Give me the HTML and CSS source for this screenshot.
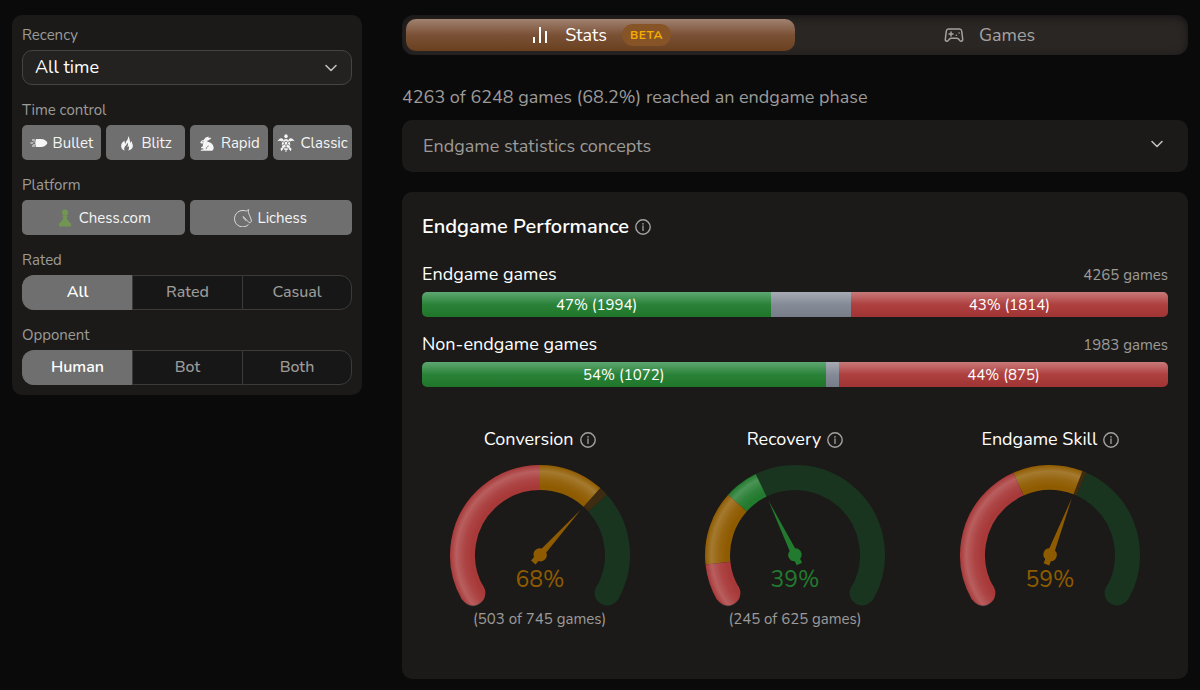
FILE: index.html
```html
<!DOCTYPE html>
<html lang="en">
<head>
    <meta charset="UTF-8">
    <meta name="viewport" content="width=device-width, initial-scale=1.0">
    <title>Endgame Stats</title>
    <link rel="stylesheet" href="styles.css">
</head>
<body>
    <!-- Shared icon and gauge shapes -->
    <svg class="defs" width="0" height="0" aria-hidden="true">
        <defs>
            <radialGradient id="shine" gradientUnits="userSpaceOnUse" cx="100" cy="93" r="90">
                <stop offset="0.76" stop-color="#fff" stop-opacity="0"/>
                <stop offset="0.84" stop-color="#fff" stop-opacity="0.06"/>
                <stop offset="0.93" stop-color="#fff" stop-opacity="0.19"/>
                <stop offset="0.97" stop-color="#fff" stop-opacity="0.08"/>
                <stop offset="1" stop-color="#fff" stop-opacity="0"/>
            </radialGradient>
            <symbol id="info" viewBox="0 0 16 16">
                <circle cx="8" cy="8" r="7.2" fill="none" stroke="currentColor" stroke-width="1.400"/>
                <circle cx="8" cy="4.900" r="0.800" fill="currentColor"/>
                <path d="M8 7v4.400" stroke="currentColor" stroke-width="1.300" stroke-linecap="round"/>
            </symbol>
            <symbol id="chevron" viewBox="0 0 14 14">
                <path d="M2 4.500l5 5 5-5" fill="none" stroke="currentColor" stroke-width="1.600" stroke-linecap="round" stroke-linejoin="round"/>
            </symbol>
        </defs>
    </svg>

    <div class="page">
        <aside class="filters">
            <div class="filter">
                <label class="filter-name" for="recency">Recency</label>
                <div class="select-box">
                    <select id="recency">
                        <option>All time</option>
                        <option>Past week</option>
                        <option>Past month</option>
                        <option>Past year</option>
                    </select>
                    <svg class="chevron"><use href="#chevron"/></svg>
                </div>
            </div>

            <div class="filter">
                <span class="filter-name" id="time-name">Time control</span>
                <div class="buttons four" role="group" aria-labelledby="time-name">
                    <button type="button">
                        <svg class="icon" viewBox="0 0 18 18" fill="currentColor">
                            <path d="M6 5h5c3 0 5 1.600 6.500 4-1.500 2.400-3.500 4-6.500 4H6c-1-2.600-1-5.400 0-8z"/>
                            <path d="M2 5.500h3v1H2zM3.500 7.500h1v1h-1zM.500 8.500h2.500v1H.500zM3.500 10h1v1h-1zM2 11.500h3v1H2z"/>
                        </svg>Bullet</button>
                    <button type="button">
                        <svg class="icon" viewBox="-1 -1 20 19" fill="currentColor">
                            <path d="M10 .800c.500 2.500-.200 3.600-1.400 5.200-1 1.300-1.300 2.400-.700 3.600C6.500 8.900 6 7.500 6.400 5.800 3.900 7.500 2.300 9.600 2.500 12c.100 2.300 1.600 4.200 3.900 4.800-.900-1.800-.600-3.200.400-4.500 1.100-1.500 2.500-2.300 2.500-4.200 1.500 1.500 1 3-.100 4.500.700.200 1.200-.200 1.500-.800.900 1.700.700 3.400-.500 5 3-.500 5.300-2.300 5.300-5 0-2.100-1.300-3.300-1.200-5.400-.700.500-1.100 1.200-1.100 2.200C11.700 6.700 12.600 3.300 10 .800z"/>
                        </svg>Blitz</button>
                    <button type="button">
                        <svg class="icon" viewBox="-1 -2 21 21" fill="currentColor">
                            <path d="M11.500 1C8.800 1.300 6.800 2.800 5.700 5 3.300 5 1.800 6.600 1.800 8.400c1.200.800 2.200.800 3.400.700-.700 1-.800 2.100-.500 3.200L2.500 13.500c0 1 .800 1.600 2.500 1.200l.500 1.300H3.800c-1 0-1.500.500-1.600 1.500h13.300c1.500-.800 2-2.300 1.700-4.200C16.700 10 14.500 8 11.500 7.200L8.700 6.300c1.800-.600 4.400-1.300 5.800-3.600-1.300-.500-2.300-.400-3.300 0z"/>
                            <circle cx="4.800" cy="7" r="0.700" fill="#6f6f6f"/>
                            <path d="M8.500 15.800c.200-2 1.200-3.300 3-4" fill="none" stroke="#6f6f6f" stroke-width="0.900"/>
                        </svg>Rapid</button>
                    <button type="button">
                        <svg class="icon" viewBox="0 0 18 18" fill="currentColor">
                            <ellipse cx="9" cy="2.300" rx="1.700" ry="2"/>
                            <path d="M6.500 5.500C4.500 3.500 2.500 3.800.500 7.200c1.700-.900 3.400-.600 4.800.700zM11.500 5.500c2-2 4-1.700 6 1.700-1.700-.900-3.400-.600-4.800.700zM5.500 13l-2 1.500.600 2.800 2.500-2.500zM12.500 13l2 1.500-.600 2.800-2.500-2.500z"/>
                            <ellipse cx="9" cy="10.500" rx="4.200" ry="5.500"/>
                            <path d="M8.500 16h1v2h-1z"/>
                            <path d="M9 7l1.600 1.200v2L9 11.400 7.400 10.200v-2zM9 11.400v3M7.400 8.200L5 7.500M10.600 8.200L13 7.500M7.400 10.200L5 11.500M10.600 10.200l2.400 1.300M6 14.500l3-1 3 1" fill="none" stroke="#6f6f6f" stroke-width="0.800"/>
                        </svg>Classic</button>
                </div>
            </div>

            <div class="filter">
                <span class="filter-name" id="platform-name">Platform</span>
                <div class="buttons two" role="group" aria-labelledby="platform-name">
                    <button type="button">
                        <svg class="icon pawn" viewBox="0 0 18 18" fill="currentColor">
                            <circle cx="9" cy="3.600" r="3.100"/>
                            <path d="M5.500 6.700h7l-1.900 1.600c.200 2.100 1.300 3.300 2.900 4.700 1 .900 1.700 2.300 1.700 4.500H2.800c0-2.200.700-3.600 1.700-4.500 1.600-1.400 2.700-2.600 2.900-4.700z"/>
                        </svg>Chess.com</button>
                    <button type="button">
                        <svg class="icon" viewBox="0 0 18 18" fill="none" stroke="currentColor" stroke-width="0.800" stroke-linejoin="round">
                            <path d="M14.500 15.500A8.200 8.200 0 1 1 9 1.500c1.600 0 2.500.300 3.200.700 1-.900 1.700-1.300 2.700-1.500-.700 1.300-.700 2.300-.300 3.600 1.500 3 2.200 5.200 2.900 7.800-.400 1.100-1.100 1.500-2.200 1.700L9.200 7.500c.400 1.800 1.200 2.900 2.900 4.100"/>
                        </svg>Lichess</button>
                </div>
            </div>

            <div class="filter">
                <span class="filter-name" id="rated-name">Rated</span>
                <div class="segments" role="radiogroup" aria-labelledby="rated-name">
                    <label><input type="radio" name="rated" checked><span>All</span></label>
                    <label><input type="radio" name="rated"><span>Rated</span></label>
                    <label><input type="radio" name="rated"><span>Casual</span></label>
                </div>
            </div>

            <div class="filter">
                <span class="filter-name" id="opponent-name">Opponent</span>
                <div class="segments" role="radiogroup" aria-labelledby="opponent-name">
                    <label><input type="radio" name="opponent" checked><span>Human</span></label>
                    <label><input type="radio" name="opponent"><span>Bot</span></label>
                    <label><input type="radio" name="opponent"><span>Both</span></label>
                </div>
            </div>
        </aside>

        <main class="content">
            <nav class="tabs">
                <button type="button" class="tab active">
                    <svg class="tab-icon" viewBox="0 0 20 20" fill="currentColor">
                        <path d="M3 12h2v6H3zM9 2h2v16H9zM15 6h2v12h-2z"/>
                    </svg>
                    <span>Stats</span>
                    <span class="beta">BETA</span>
                </button>
                <button type="button" class="tab">
                    <svg class="tab-icon" viewBox="0 0 20 20" fill="none" stroke="currentColor" stroke-width="1.500" stroke-linecap="round" stroke-linejoin="round">
                        <path d="M4.500 4h11c1.300 0 2 .800 2.200 2l1 8.500c.100 1.500-1.700 2.200-2.700 1.200L14.500 14c-.500-.500-1-.700-1.700-.700H7.200c-.700 0-1.200.200-1.700.700L4 15.700c-1 1-2.800.300-2.700-1.200l1-8.500c.200-1.200.900-2 2.200-2z"/>
                        <path d="M5 9h4M7 7v4M12.300 10.200h.1M15 8h.1"/>
                    </svg>
                    <span>Games</span>
                </button>
            </nav>

            <p class="summary">4263 of 6248 games (68.2%) reached an endgame phase</p>

            <button type="button" class="concepts">
                Endgame statistics concepts
                <svg class="chevron"><use href="#chevron"/></svg>
            </button>

            <section class="card">
                <h2>Endgame Performance <svg class="info"><use href="#info"/></svg></h2>

                <div class="result">
                    <div class="result-head">
                        <h3>Endgame games</h3>
                        <span class="muted">4265 games</span>
                    </div>
                    <div class="bar">
                        <div class="win" style="width: 46.8%">47% (1994)</div>
                        <div class="draw"></div>
                        <div class="loss" style="width: 42.5%">43% (1814)</div>
                    </div>
                </div>

                <div class="result">
                    <div class="result-head">
                        <h3>Non-endgame games</h3>
                        <span class="muted">1983 games</span>
                    </div>
                    <div class="bar">
                        <div class="win" style="width: 54.1%">54% (1072)</div>
                        <div class="draw"></div>
                        <div class="loss" style="width: 44.1%">44% (875)</div>
                    </div>
                </div>

                <!-- Each arc runs from -120deg to 120deg, pathLength makes one unit one percent -->
                <div class="gauges">
                    <div class="gauge">
                        <h3>Conversion <svg class="info"><use href="#info"/></svg></h3>
                        <svg class="dial" viewBox="0 0 200 145">
                            <g class="arc">
                                <circle class="cap red" cx="32.900" cy="131" r="12.500"/>
                                <circle class="cap dim-green" cx="167.100" cy="131" r="12.500"/>
                                <path class="dim-green" pathLength="100" stroke-dasharray="0 70 30 100" d="M32.900 131.750A77.500 77.500 0 1 1 167.100 131.750"/>
                                <path class="dim-amber" pathLength="100" stroke-dasharray="0 67 3 100" d="M32.900 131.750A77.500 77.500 0 1 1 167.100 131.750"/>
                                <path class="amber" pathLength="100" stroke-dasharray="0 50 17.500 100" d="M32.900 131.750A77.500 77.500 0 1 1 167.100 131.750"/>
                                <path class="red" pathLength="100" stroke-dasharray="50 100" d="M32.900 131.750A77.500 77.500 0 1 1 167.100 131.750"/>
                                <path class="shine" pathLength="100" stroke-dasharray="67.500 100" d="M32.900 131.750A77.500 77.500 0 1 1 167.100 131.750"/>
                                <path class="shine-cap" d="M22.060 138A12.500 12.500 0 0 0 43.710 125.500z"/>
                            </g>
                            <path class="needle amber-fill" transform="rotate(42 100 93)" d="M100 32l3 55a6.300 6.300 0 0 1 0 11.500v4.500h-6v-4.500a6.300 6.300 0 0 1 0-11.500z"/>
                            <text class="amber-fill" x="100" y="125">68%</text>
                        </svg>
                        <p class="muted">(503 of 745 games)</p>
                    </div>

                    <div class="gauge">
                        <h3>Recovery <svg class="info"><use href="#info"/></svg></h3>
                        <svg class="dial" viewBox="0 0 200 145">
                            <g class="arc">
                                <circle class="cap red" cx="32.900" cy="131" r="12.500"/>
                                <circle class="cap dim-green" cx="167.100" cy="131" r="12.500"/>
                                <path class="dim-green" pathLength="100" stroke-dasharray="0 39 61 100" d="M32.900 131.750A77.500 77.500 0 1 1 167.100 131.750"/>
                                <path class="green" pathLength="100" stroke-dasharray="0 30 9.200 100" d="M32.900 131.750A77.500 77.500 0 1 1 167.100 131.750"/>
                                <path class="amber" pathLength="100" stroke-dasharray="0 10 20 100" d="M32.900 131.750A77.500 77.500 0 1 1 167.100 131.750"/>
                                <path class="red" pathLength="100" stroke-dasharray="10 100" d="M32.900 131.750A77.500 77.500 0 1 1 167.100 131.750"/>
                                <path class="shine" pathLength="100" stroke-dasharray="39.200 100" d="M32.900 131.750A77.500 77.500 0 1 1 167.100 131.750"/>
                                <path class="shine-cap" d="M22.060 138A12.500 12.500 0 0 0 43.710 125.500z"/>
                            </g>
                            <path class="needle green-fill" transform="rotate(-26 100 93)" d="M100 32l3 55a6.300 6.300 0 0 1 0 11.500v4.500h-6v-4.500a6.300 6.300 0 0 1 0-11.500z"/>
                            <text class="green-fill" x="100" y="125">39%</text>
                        </svg>
                        <p class="muted">(245 of 625 games)</p>
                    </div>

                    <div class="gauge">
                        <h3>Endgame Skill <svg class="info"><use href="#info"/></svg></h3>
                        <svg class="dial" viewBox="0 0 200 145">
                            <g class="arc">
                                <circle class="cap red" cx="32.900" cy="131" r="12.500"/>
                                <circle class="cap dim-green" cx="167.100" cy="131" r="12.500"/>
                                <path class="dim-green" pathLength="100" stroke-dasharray="0 60 40 100" d="M32.900 131.750A77.500 77.500 0 1 1 167.100 131.750"/>
                                <path class="dim-amber" pathLength="100" stroke-dasharray="0 58 2 100" d="M32.900 131.750A77.500 77.500 0 1 1 167.100 131.750"/>
                                <path class="amber" pathLength="100" stroke-dasharray="0 40 18.800 100" d="M32.900 131.750A77.500 77.500 0 1 1 167.100 131.750"/>
                                <path class="red" pathLength="100" stroke-dasharray="40 100" d="M32.900 131.750A77.500 77.500 0 1 1 167.100 131.750"/>
                                <path class="shine" pathLength="100" stroke-dasharray="58.800 100" d="M32.900 131.750A77.500 77.500 0 1 1 167.100 131.750"/>
                                <path class="shine-cap" d="M22.060 138A12.500 12.500 0 0 0 43.710 125.500z"/>
                            </g>
                            <path class="needle amber-fill" transform="rotate(21 100 93)" d="M100 32l3 55a6.300 6.300 0 0 1 0 11.500v4.500h-6v-4.500a6.300 6.300 0 0 1 0-11.500z"/>
                            <text class="amber-fill" x="100" y="125">59%</text>
                        </svg>
                    </div>
                </div>
            </section>
        </main>
    </div>
</body>
</html>
```

FILE: styles.css
```css
* {
    box-sizing: border-box;
}

body {
    margin: 0;
    background-color: #0a0a0a;
    color: #fff;
    font-family: Nunito, Lato, "Liberation Sans", sans-serif;
    font-size: 18px;
}

h2, h3, p {
    margin: 0;
}

button, select {
    font-family: inherit;
    color: inherit;
    cursor: pointer;
}

.defs {
    position: absolute;
}

.page {
    display: grid;
    grid-template-columns: 350px 1fr;
    align-items: start;
    gap: 40px;
    padding: 15px 12px 11px;
}

/* Filters */
.filters {
    display: flex;
    flex-direction: column;
    gap: 15px;
    padding: 10px;
    background-color: #1b1a18;
    border-radius: 10px;
}

.filter {
    display: flex;
    flex-direction: column;
    gap: 5px;
}

.filter-name {
    font-size: 15px;
    line-height: 20px;
    color: #9c9b99;
}

.select-box {
    display: grid;
    align-items: center;
}

.select-box select, .select-box .chevron {
    grid-area: 1 / 1;
}

.select-box select {
    appearance: none;
    width: 100%;
    height: 35px;
    padding: 0 12px 2px;
    font-size: 18px;
    background-color: #232221;
    border: 1px solid #454443;
    border-radius: 10px;
}

.select-box .chevron {
    justify-self: end;
    margin-right: 14px;
    pointer-events: none;
}

.chevron {
    width: 14px;
    height: 14px;
    color: #c0bfbe;
}

.buttons {
    display: grid;
    gap: 5px;
}

.four {
    grid-template-columns: repeat(4, 1fr);
}

.two {
    grid-template-columns: repeat(2, 1fr);
}

.buttons button {
    display: flex;
    justify-content: center;
    align-items: center;
    gap: 5px;
    height: 35px;
    padding: 0;
    font-size: 15px;
    color: #f5f5f5;
    background-color: #6f6f6f;
    border: none;
    border-radius: 5px;
}

.icon {
    flex: none;
    width: 18px;
    height: 18px;
}

.pawn {
    color: #739552;
}

.segments {
    display: grid;
    grid-template-columns: repeat(3, 1fr);
    height: 35px;
}

.segments label {
    display: grid;
    padding-bottom: 2px;
    background-color: #171717;
    border: 1px solid #3c3b3a;
    border-right-width: 0;
    cursor: pointer;
}

.segments label:first-child {
    border-radius: 12px 0 0 12px;
}

.segments label:last-child {
    border-right-width: 1px;
    border-radius: 0 12px 12px 0;
}

.segments input {
    grid-area: 1 / 1;
    appearance: none;
    margin: 0;
}

.segments span {
    grid-area: 1 / 1;
    place-self: center;
    font-size: 16px;
    font-weight: 500;
    color: #9c9b99;
}

.segments label:has(input:checked) {
    background-color: #6f6f6f;
    border-color: #6f6f6f;
}

.segments input:checked + span {
    color: #fff;
    font-weight: 600;
}

/* Tabs */
.tabs {
    display: grid;
    grid-template-columns: 1fr 1fr;
    height: 40px;
    padding: 4px;
    background-color: #2a2624;
    border-radius: 12px;
    box-shadow: inset 0 2px 8px #141312;
}

.tab {
    display: flex;
    justify-content: center;
    align-items: center;
    gap: 15px;
    padding: 0;
    font-size: 18px;
    color: #a5a3a1;
    background: none;
    border: none;
    border-radius: 10px;
}

.tab.active {
    color: #fff;
    background: linear-gradient(#a08170, #7b5136 50%, #69401f);
}

.tab-icon {
    width: 20px;
    height: 20px;
}

.beta {
    padding: 0 8px;
    font-size: 12px;
    font-weight: 700;
    line-height: 22px;
    letter-spacing: 0.5px;
    color: #f5ab00;
    background-color: #865426;
    border-radius: 11px;
}

.summary {
    margin: 30px 0 10px;
    line-height: 25px;
    color: #9c9b99;
}

.concepts {
    display: flex;
    justify-content: space-between;
    align-items: center;
    width: 100%;
    height: 52px;
    padding: 0 24px 0 21px;
    font-size: 18px;
    color: #9c9b99;
    background-color: #1b1a18;
    border: none;
    border-radius: 10px;
}

.concepts .chevron {
    margin-bottom: 4px;
}

/* Performance card */
.card {
    margin-top: 20px;
    padding: 20px 20px 47px;
    background-color: #1b1a18;
    border-radius: 10px;
}

.card h2, .card h3 {
    display: flex;
    align-items: center;
    gap: 6px;
}

.card h2 {
    margin-bottom: 20px;
    font-size: 20px;
    font-weight: 600;
    line-height: 30px;
}

.card h3 {
    font-size: 18px;
    font-weight: 400;
    line-height: 25px;
}

.info {
    flex: none;
    width: 16px;
    height: 16px;
    color: #a5a3a1;
}

.muted {
    font-size: 15px;
    line-height: 25px;
    color: #9c9b99;
}

.result + .result {
    margin-top: 15px;
}

.result-head {
    display: flex;
    justify-content: space-between;
    align-items: baseline;
    height: 25px;
    margin-bottom: 5px;
}

.bar {
    display: flex;
    height: 25px;
    overflow: hidden;
    font-size: 15px;
    line-height: 26px;
    text-align: center;
    border-radius: 5px;
}

.win {
    background: linear-gradient(#5ea772, #2a8238 50%, #1f762a);
}

.draw {
    flex: 1;
    background: linear-gradient(#a6abb5, #858b96 50%, #767d88);
}

.loss {
    background: linear-gradient(#c97a7a, #ae4040 50%, #a03333);
}

/* Gauges */
.gauges {
    display: grid;
    grid-template-columns: repeat(3, 1fr);
    gap: 20px;
    margin-top: 40px;
}

.gauge {
    display: flex;
    flex-direction: column;
    align-items: center;
}

.dial {
    width: 200px;
    height: 145px;
    margin-top: 10px;
}

.dial text {
    font-size: 23px;
    text-anchor: middle;
}

.arc path {
    fill: none;
    stroke-width: 25px;
}

.red {
    stroke: #a83939;
}

.amber {
    stroke: #8f5b00;
}

.green {
    stroke: #227a2e;
}

.dim-green {
    stroke: #19351f;
}

.dim-amber {
    stroke: #3e2c12;
}

.arc .cap {
    stroke: none;
}

.cap.red {
    fill: #a83939;
}

.cap.dim-green {
    fill: #19351f;
}

.shine {
    stroke: url(#shine);
}

.arc .shine-cap {
    fill: url(#shine);
}

.amber-fill {
    fill: #8f5b00;
}

.green-fill {
    fill: #227a2e;
}
```
